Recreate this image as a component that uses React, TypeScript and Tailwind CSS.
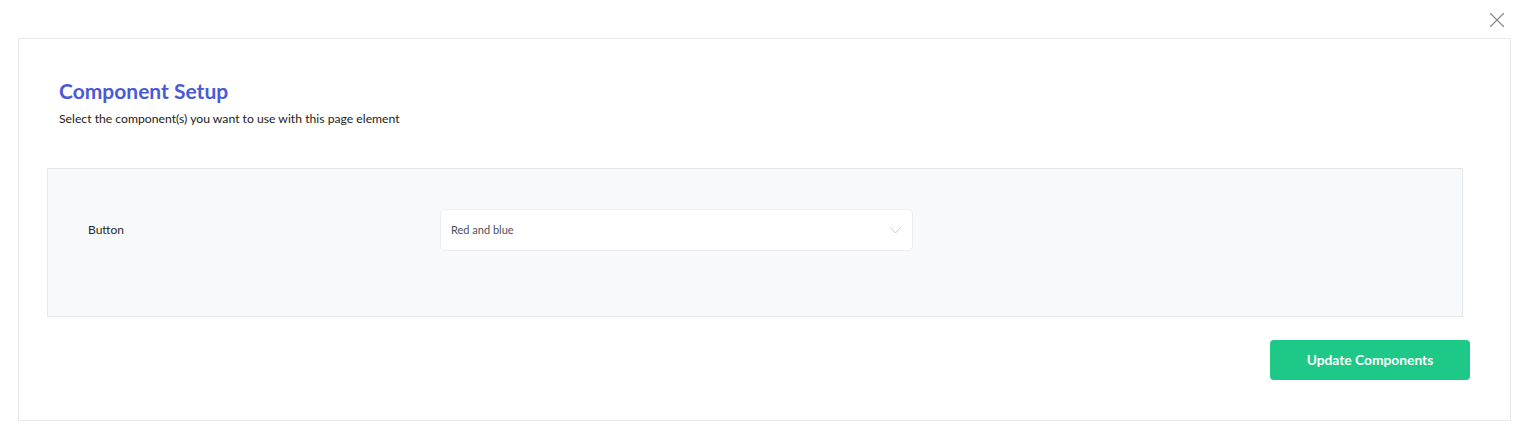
import { X } from "lucide-react";

const font = { fontFamily: "Lato, 'Open Sans', sans-serif" };

function ComponentRow({ label, value }: { label: string; value: string }) {
  return (
    <div className="flex items-center">
      <div className="w-[392px] pl-[40px] text-[12px] text-[#2a2a2a]">{label}</div>
      <button
        type="button"
        className="flex h-[42px] w-[473px] items-center justify-between rounded-[5px] border border-[#ebedf0] bg-white pl-[10px] pr-[10px] text-left text-[11px] text-[#4a4f5a]"
      >
        <span>{value}</span>
        <svg width="11" height="7" viewBox="0 0 11 7" fill="none" className="mr-[1px]">
          <polyline points="0.5,0.5 5.5,6 10.5,0.5" stroke="#c7cad0" strokeWidth="1" />
        </svg>
      </button>
    </div>
  );
}

export default function App() {
  return (
    <div className="relative h-[437px] w-full overflow-hidden bg-white" style={font}>
      <button type="button" className="absolute right-[18px] top-[7px] text-[#8a8a8a]" aria-label="Close">
        <X size={26} strokeWidth={1.1} />
      </button>

      <div className="ml-[18px] mr-[17px] mt-[38px] flex h-[383px] flex-col border border-[#e8e8e8] pt-[39px]">
        <div className="pl-[40px]">
          <h1 className="text-[21px] font-bold leading-[26px] text-[#4a5ad6]">Component Setup</h1>
          <p className="mt-[7px] text-[12.2px] leading-[16px] text-[#222]">
            Select the component(s) you want to use with this page element
          </p>
        </div>

        <div className="ml-[28px] mt-[41px] h-[149px] w-[1416px] border border-[#e6e7ea] bg-[#f8f9fb] pt-[40px]">
          <ComponentRow label="Button" value="Red and blue" />
        </div>

        <div className="mr-[40px] mt-[23px] flex justify-end">
          <button
            type="button"
            className="h-[40px] w-[200px] rounded-[4px] bg-[#1ec886] text-[13.8px] font-bold text-white"
          >
            Update Components
          </button>
        </div>
      </div>
    </div>
  );
}
